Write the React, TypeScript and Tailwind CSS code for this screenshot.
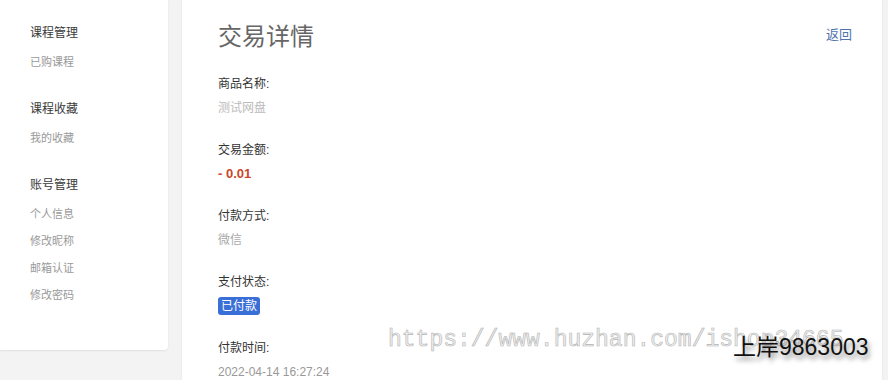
import React from 'react';

// ─── Data ─────────────────────────────────────────────────────────────────────

const MENU = [
  { title: '课程管理', items: ['已购课程'] },
  { title: '课程收藏', items: ['我的收藏'] },
  { title: '账号管理', items: ['个人信息', '修改昵称', '邮箱认证', '修改密码'] },
];

const FONT = "font-['Liberation_Sans','Noto_Sans_CJK_SC',sans-serif]";

// ─── Sidebar ──────────────────────────────────────────────────────────────────

function Sidebar() {
  return (
    <aside className="w-[168px] shrink-0 self-start bg-white rounded-br-[4px] shadow-[0_1px_2px_rgba(0,0,0,0.08)] pl-[30px] pt-[19px] pb-[41px]">
      {MENU.map((group, i) => (
        <div key={group.title} className={i > 0 ? 'mt-[19px]' : ''}>
          <div className="h-7 leading-7 text-[12px] text-[#3a3a3a]">{group.title}</div>
          <div className="mt-[2px]">
            {group.items.map((item) => (
              <div key={item} className="h-[27px] leading-[27px] text-[11px] text-[#999]">
                {item}
              </div>
            ))}
          </div>
        </div>
      ))}
    </aside>
  );
}

// ─── Detail field ─────────────────────────────────────────────────────────────

function Field({ label, children }: { label: string; children: React.ReactNode }) {
  return (
    <div className="mt-6 first:mt-0">
      <div className="h-[18px] leading-[18px] text-[12px] text-[#333]">{label}</div>
      <div className="mt-[6px] flex">{children}</div>
    </div>
  );
}

// ─── Page ─────────────────────────────────────────────────────────────────────

export default function App() {
  return (
    <div className={`relative w-[888px] h-[380px] overflow-hidden bg-[#f3f3f3] flex gap-[14px] ${FONT}`}>
      <Sidebar />

      <main className="w-[700px] shrink-0 bg-white shadow-[0_0_2px_rgba(0,0,0,0.08)] pl-[36px] pr-[30px] pt-[21px]">
        <div className="flex items-center justify-between h-8">
          <h1 className="text-[24px] leading-8 text-[#666] font-normal">交易详情</h1>
          <a className="text-[13px] text-[#4f74ad] -mt-[4px]">返回</a>
        </div>

        <div className="mt-[22px]">
          <Field label="商品名称:">
            <div className="h-[18px] leading-[18px] text-[12px] text-[#bbb]">测试网盘</div>
          </Field>
          <Field label="交易金额:">
            <div className="h-[18px] leading-[18px] text-[13px] font-bold text-[#c8472b]">- 0.01</div>
          </Field>
          <Field label="付款方式:">
            <div className="h-[18px] leading-[18px] text-[12px] text-[#aaa]">微信</div>
          </Field>
          <Field label="支付状态:">
            <span className="h-[18px] leading-[18px] px-[3px] rounded-[3px] bg-[#3a6fd8] text-white text-[12px]">
              已付款
            </span>
          </Field>
          <Field label="付款时间:">
            <div className="h-[18px] leading-[18px] text-[12px] text-[#999]">2022-04-14 16:27:24</div>
          </Field>
        </div>
      </main>

      {/* watermark overlays */}
      <div className="absolute left-[388px] top-[325px] font-['Liberation_Mono',monospace] text-[23px] leading-[30px] text-[#f0f0f0] [-webkit-text-stroke:0.6px_#b4b4b4] whitespace-nowrap">
        https://www.huzhan.com/ishop34665
      </div>
      <div className="absolute left-[733px] top-[332px] text-[23px] leading-[30px] text-[#111] whitespace-nowrap [text-shadow:2px_4px_5px_rgba(0,0,0,0.45)]">
        上岸9863003
      </div>
    </div>
  );
}
